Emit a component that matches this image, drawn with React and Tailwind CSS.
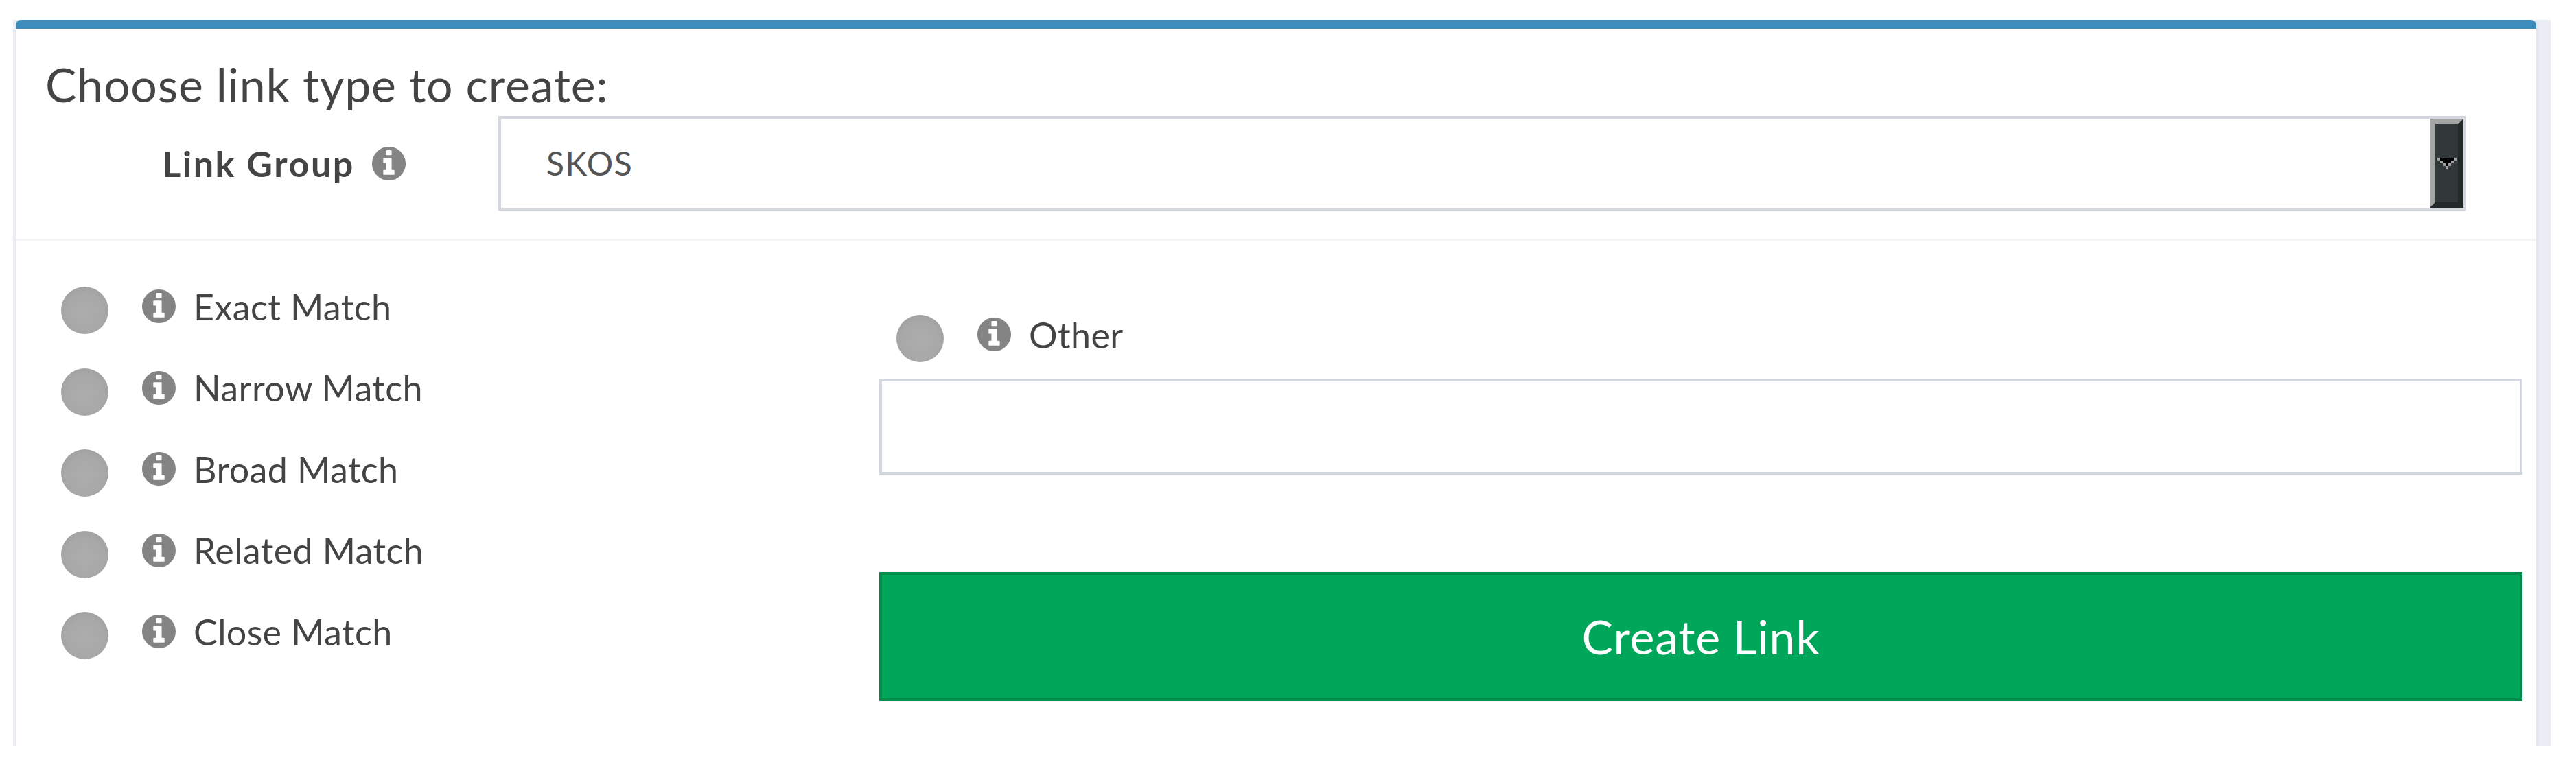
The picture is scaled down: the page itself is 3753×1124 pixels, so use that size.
import React from "react"

const MATCH_TYPES = ["Exact Match", "Narrow Match", "Broad Match", "Related Match", "Close Match"]

const ARROW_GREY = [[0, 0], [6, 0], [1, 1], [5, 1], [2, 2], [4, 2], [3, 3]]

function InfoIcon({ className }) {
  return (
    <svg viewBox="0 128 1536 1536" className={`w-[49px] h-[49px] shrink-0 fill-[#848484] ${className}`}>
      <path d="M1024 1376v-160q0-14-9-23t-23-9h-96v-512q0-14-9-23t-23-9h-320q-14 0-23 9t-9 23v160q0 14 9 23t23 9h96v320h-96q-14 0-23 9t-9 23v160q0 14 9 23t23 9h448q14 0 23-9t9-23zm-128-896v-160q0-14-9-23t-23-9h-192q-14 0-23 9t-9 23v160q0 14 9 23t23 9h192q14 0 23-9t9-23zm640 416q0 209-103 385.5t-279.5 279.5-385.5 103-385.5-103-279.5-279.5-103-385.5 103-385.5 279.5-279.5 385.5-103 385.5 103 279.5 279.5 103 385.5z" />
    </svg>
  )
}

function Radio() {
  return (
    <span className="block w-[69px] h-[69px] shrink-0 rounded-full bg-[radial-gradient(circle_at_50%_55%,#adadad_0%,#a8a8a8_55%,#999999_100%)]" />
  )
}

function RadioOption({ label }) {
  return (
    <label className="flex items-start">
      <Radio />
      <InfoIcon className="ml-[49px] mt-1" />
      <span className="h-[49px] ml-[26px] mt-1 flex items-center text-[52px] leading-none tracking-[0.4px] text-[#444444]">{label}</span>
    </label>
  )
}

function SpinButton() {
  return (
    <div className="w-[49px] h-full flex items-center justify-center border-[8px] border-t-[#a5a5a5] border-l-[#a5a5a5] border-r-[#232828] border-b-[#232828] bg-[#32373a]">
      <svg viewBox="0 0 7 4" className="w-[29px] h-[16px] shrink-0" shapeRendering="crispEdges">
        <path d="M1 0h5v1H5v1H4v1H3V2H2V1H1z" fill="#000000" />
        {ARROW_GREY.map(([x, y]) => (
          <rect key={`${x}-${y}`} x={x} y={y} width="1" height="1" fill="#a0a0a0" />
        ))}
      </svg>
    </div>
  )
}

export default function App() {
  return (
    <div className="bg-white min-h-[1124px] pt-[29px] pl-[19px] font-['Lato','Liberation_Sans',sans-serif]">
      <div className="w-[3697px] h-[1059px] pl-[4px] pr-[21px] bg-[#eaedf3]">
        <div className="h-full bg-white border-t-[13px] border-[#3c8dbc] rounded-t-[8px] shadow-[4px_0_0_#e4e7ee]">
          <div className="h-[310px] border-b-[4px] border-[#f4f4f4]">
            <h3 className="h-[127px] pl-[43px] pt-[47px] text-[68px] leading-none tracking-[0.8px] font-normal text-[#444444]">Choose link type to create:</h3>
            <div className="flex items-center">
              <div className="w-[703px] pr-[135px] flex items-center justify-end text-[#444444]">
                <span className="text-[52px] leading-none font-bold tracking-[2.6px]">Link Group</span>
                <InfoIcon className="ml-[25px]" />
              </div>
              <div className="w-[2867px] h-[138px] pl-[66px] flex items-center justify-between border-[4px] border-[#d2d6de] bg-white">
                <span className="text-[48px] leading-none tracking-[1.5px] text-[#555555]">SKOS</span>
                <SpinButton />
              </div>
            </div>
          </div>

          <div className="flex">
            <div className="w-[1258px] pt-[66px] pl-[66px] flex flex-col gap-[49.5px]">
              {MATCH_TYPES.map((label) => (
                <RadioOption key={label} label={label} />
              ))}
            </div>
            <div className="w-[2394px] pt-[107px]">
              <div className="pl-[25px]">
                <RadioOption label="Other" />
              </div>
              <input type="text" className="block w-full h-[140px] mt-[24px] border-[4px] border-[#d2d6de] bg-white" />
              <button type="button" className="block w-full h-[188px] mt-[142px] border-[4px] border-[#008d4c] bg-[#00a65a] text-white text-[68px] leading-none tracking-[0.7px]">
                Create Link
              </button>
            </div>
          </div>
        </div>
      </div>
    </div>
  )
}
